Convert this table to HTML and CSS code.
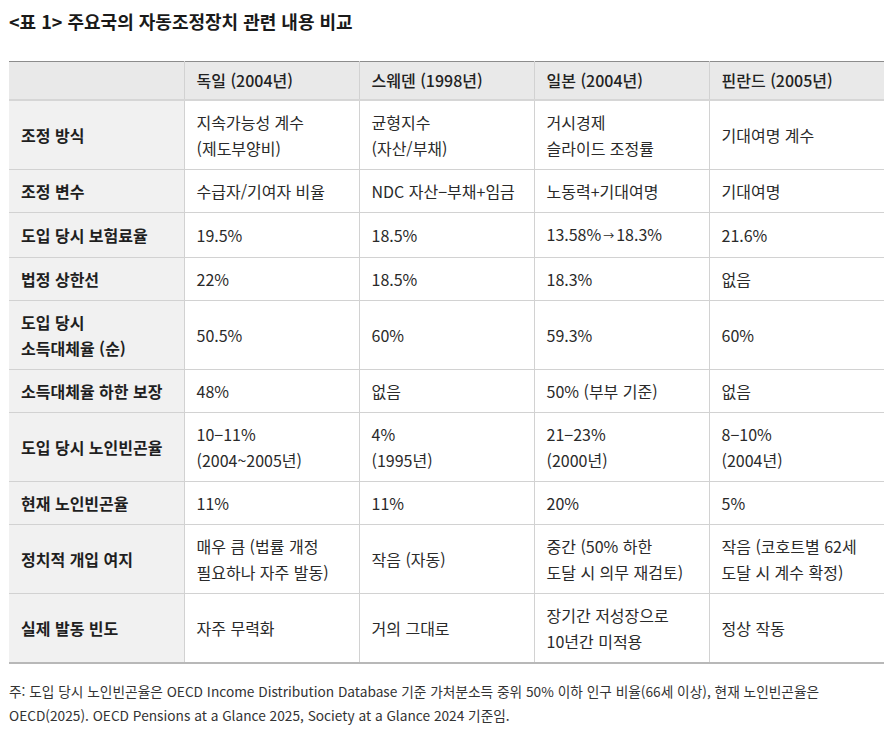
FILE: index.html
```html
<!DOCTYPE html>
<html lang="ko">
<head>
<meta charset="utf-8">
<link rel="stylesheet" href="styles.css">
</head>
<body>
<div class="page">
  <h1 class="title">&lt;표 1&gt; 주요국의 자동조정장치 관련 내용 비교</h1>
  <table class="cmp">
    <colgroup>
      <col class="c1"><col><col><col><col>
    </colgroup>
    <thead>
      <tr>
        <th class="corner"></th>
        <th>독일 (2004년)</th>
        <th>스웨덴 (1998년)</th>
        <th>일본 (2004년)</th>
        <th>핀란드 (2005년)</th>
      </tr>
    </thead>
    <tbody>
      <tr>
        <th>조정 방식</th>
        <td>지속가능성 계수<br>(제도부양비)</td>
        <td>균형지수<br>(자산/부채)</td>
        <td>거시경제<br>슬라이드 조정률</td>
        <td>기대여명 계수</td>
      </tr>
      <tr>
        <th>조정 변수</th>
        <td>수급자/기여자 비율</td>
        <td>NDC 자산−부채+임금</td>
        <td>노동력+기대여명</td>
        <td>기대여명</td>
      </tr>
      <tr>
        <th>도입 당시 보험료율</th>
        <td>19.5%</td>
        <td>18.5%</td>
        <td>13.58%<span class="arr">→</span>18.3%</td>
        <td>21.6%</td>
      </tr>
      <tr>
        <th>법정 상한선</th>
        <td>22%</td>
        <td>18.5%</td>
        <td>18.3%</td>
        <td>없음</td>
      </tr>
      <tr>
        <th>도입 당시<br>소득대체율 (순)</th>
        <td>50.5%</td>
        <td>60%</td>
        <td>59.3%</td>
        <td>60%</td>
      </tr>
      <tr>
        <th>소득대체율 하한 보장</th>
        <td>48%</td>
        <td>없음</td>
        <td>50% (부부 기준)</td>
        <td>없음</td>
      </tr>
      <tr>
        <th>도입 당시 노인빈곤율</th>
        <td>10−11%<br>(2004~2005년)</td>
        <td>4%<br>(1995년)</td>
        <td>21−23%<br>(2000년)</td>
        <td>8−10%<br>(2004년)</td>
      </tr>
      <tr>
        <th>현재 노인빈곤율</th>
        <td>11%</td>
        <td>11%</td>
        <td>20%</td>
        <td>5%</td>
      </tr>
      <tr>
        <th>정치적 개입 여지</th>
        <td>매우 큼 (법률 개정<br>필요하나 자주 발동)</td>
        <td>작음 (자동)</td>
        <td>중간 (50% 하한<br>도달 시 의무 재검토)</td>
        <td>작음 (코호트별 62세<br>도달 시 계수 확정)</td>
      </tr>
      <tr>
        <th>실제 발동 빈도</th>
        <td>자주 무력화</td>
        <td>거의 그대로</td>
        <td>장기간 저성장으로<br>10년간 미적용</td>
        <td>정상 작동</td>
      </tr>
    </tbody>
  </table>
  <p class="note">주: 도입 당시 노인빈곤율은 OECD Income Distribution Database 기준 가처분소득 중위 50% 이하 인구 비율(66세 이상), 현재 노인빈곤율은<br>OECD(2025). OECD Pensions at a Glance 2025, Society at a Glance 2024 기준임.</p>
</div>
</body>
</html>
```

FILE: styles.css
```css
* { box-sizing: border-box; }
html, body { margin: 0; padding: 0; background: #fff; }
body {
  font-family: "Noto Sans CJK KR", "Noto Sans", sans-serif;
  color: #222;
}
.page {
  padding: 8px 11px 0 9px;
}
.title {
  margin: 0;
  font-size: 18px;
  font-weight: 700;
  line-height: 26px;
  color: #1a1a1a;
}
.cmp {
  margin-top: 27px;
  width: 875px;
  border-collapse: collapse;
  table-layout: fixed;
  border-top: 1px solid #8c8c8c;
  border-bottom: 2px solid #b8b8b8;
  font-size: 16px;
}
.cmp th, .cmp td {
  text-align: left;
  vertical-align: middle;
  padding: 8px 12px;
  line-height: 26px;
  border-bottom: 1px solid #d2d2d2;
  border-left: 1px solid #d2d2d2;
}
.cmp tr > :first-child { border-left: none; }
.cmp thead th {
  background: #e9e9e9;
  font-weight: 500;
  padding: 5px 12px 6px;
  border-bottom: 2px solid #d6d6d6;
}
.cmp tbody th {
  background: #f1f1f1;
  font-weight: 700;
  color: #1f1f1f;
}
.cmp td { font-weight: 400; color: #2a2a2a; }
.arr { font-size: 11px; margin: 0 2px; position: relative; top: -1px; }
.note {
  margin: 15px 0 0;
  font-size: 13.7px;
  line-height: 24px;
  color: #333;
}
```
